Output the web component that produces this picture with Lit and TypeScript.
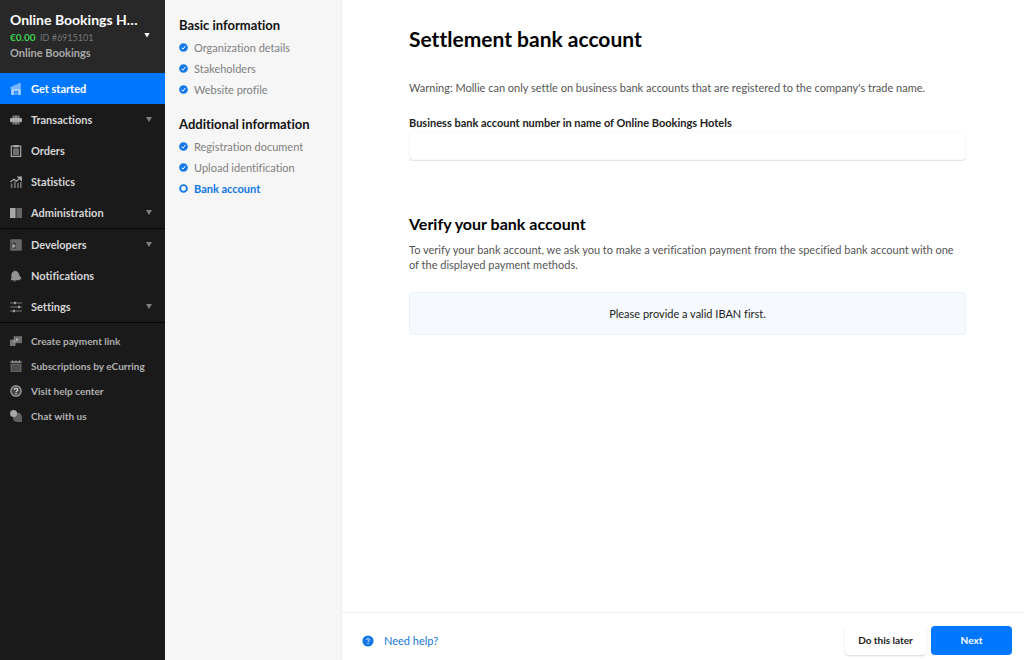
import { LitElement, html, css, svg, nothing, type TemplateResult, type SVGTemplateResult } from "lit";
import { customElement, property, state } from "lit/decorators.js";
import { classMap } from "lit/directives/class-map.js";

const icons: Record<string, SVGTemplateResult> = {
  home: svg`<path d="M0 4.600 6 1.200h2V0h2.800v5.600H0z" opacity=".55"/><path d="M1.200 5.600h9.600V12H8V8H4v4H1.200z" opacity=".75"/><path d="M4.600 8.600h2.800V12H4.600z" opacity=".4"/>`,
  stack: svg`<path d="M2.500 1.600h7v2.600h-7zM2.500 8.200h7v2.200h-7z" opacity=".65"/><rect y="4" width="12" height="4.200" rx="1"/>`,
  clipboard: svg`<path d="M1.300 1.200h9.400v10.200H1.300z" fill="none" stroke="currentColor" stroke-width="1.200"/><path d="M3 3.400h6V10H3z" opacity=".6"/><path d="M3.500 0h5v2.400h-5z"/>`,
  chart: svg`<path d="M.8 12V7.500h1.700V12zM4 12V5.500h1.700V12zM7.200 12V7h1.700V12zM10 12V6h1.700V12z" opacity=".6"/><path d="M.4 6 4 3.200l2.600 2L9.500 2.500" fill="none" stroke="currentColor" stroke-width="1.200"/><path d="M6.600.4H12v5.400z"/>`,
  book: svg`<path d="M0 1h5.600v10H0z"/><path d="M6.400 1H12v10H6.400z" opacity=".55"/>`,
  terminal: svg`<rect x=".2" y=".3" width="11.600" height="11.400" rx="1" opacity=".55"/><path d="M1.200 3.600h4.600v6H1.200z" fill="#1a1a1a" opacity=".5"/><path d="m2.400 4.400 3.400 2.500-3.400 2.500z"/>`,
  bell: svg`<path d="M4.200.2 5 1.100c2.600 0 4 1.700 4.300 4.200L11.500 8.500 9 10.200H.6L1.400 8V4.600c0-1.600 1-2.800 2.300-3.200z" opacity=".85"/><path d="M2.800 10.500h3.400L4.500 12z" opacity=".6"/>`,
  sliders: svg`<path d="M0 2h12M0 6h12M0 10h12" stroke="currentColor" opacity=".65"/><path d="M4 .8h1.800v2.400H4zM8 4.800h1.800v2.400H8zM3 8.800h1.800v2.400H3z"/>`,
  link: svg`<path d="M0 4.600h5.500v6.400H0z" opacity=".65"/><path d="M3.600 1.200H12v7H3.600z" opacity=".6"/><path d="M6 2.800 9.200 4.700 6 6.600z"/>`,
  calendar: svg`<path d="M.5 4h11v8H.5z" opacity=".5"/><path d="M.5 1h1.500V0h1v1h2.500V0h1v1H9V0h1v1h1.500v2.200H.5z" opacity=".7"/><path d="M2 6h8M2 8h8M2 10h8" stroke="#1a1a1a" stroke-width=".7" stroke-dasharray="1.500 .7"/>`,
  help: svg`<circle cx="6" cy="6" r="5.900" opacity=".8"/><circle cx="6" cy="6" r="4.300" fill="#444"/><path d="M4.300 4.900c0-2.200 3.400-2.100 3.400-.1C7.700 6 6 5.900 6 7.200M6 8.100v1.300" fill="none" stroke="#d0d0d0" stroke-width="1.300"/>`,
  chat: svg`<path d="M7.500 2.500a4.500 4.500 0 0 1 4.500 4.700V12H7a4.500 4.500 0 0 1-4.200-4.500z" opacity=".5"/><circle cx="3.600" cy="3.600" r="3.500"/>`,
  check: svg`<circle cx="6" cy="6" r="5.800"/><path d="m3.400 6.300 1.900 1.900 3.300-4.300" fill="none" stroke="#fff" stroke-width="1.300"/>`,
  ring: svg`<circle cx="6" cy="6" r="4.500" fill="#fff" stroke="currentColor" stroke-width="2.500"/>`,
  question: svg`<circle cx="6" cy="6" r="5.600"/><path d="M4.600 4.900c0-1.800 2.900-1.700 2.900-.1C7.500 5.800 6 5.800 6 7M6 7.900v1.100" fill="none" stroke="#fff"/>`,
};

const icon = (name: string): TemplateResult =>
  html`<svg class="icon" viewBox="0 0 12 12" fill="currentColor" aria-hidden="true">${icons[name]}</svg>`;

const base = css`
  * { box-sizing: border-box; }
  a { color: inherit; text-decoration: none; }
  button, input { font: inherit; font-variant-ligatures: inherit; color: inherit; }
  ul { list-style: none; margin: 0; padding: 0; }
  .icon { display: block; width: 12px; height: 12px; flex: none; }
`;

interface NavItem { label: string; icon: string; more?: boolean; active?: boolean; }

@customElement("side-nav")
class SideNav extends LitElement {
  static styles = [base, css`
    :host { display: block; background: #1a1a1a; color: #d6d6d6; font-weight: 700; }
    .account {
      display: grid; grid-template-columns: 1fr 10px; align-items: center;
      width: 100%; height: 73px; padding: 0 11px 3px 10px;
      border: 0; background: #282828; text-align: left;
    }
    .info { min-width: 0; }
    .name, .meta, .site { display: block; white-space: nowrap; }
    .name { font-size: 14px; color: #fff; line-height: 18px; }
    .meta { font-size: 10px; line-height: 16px; }
    .site { font-size: 11px; color: #a8a8a8; line-height: 13px; }
    .amount { color: #3fd14f; }
    .id { margin-left: 2px; color: #777; font-size: 9px; font-weight: 400; }
    .arrow { width: 6px; height: 5px; background: #808080; clip-path: polygon(0 0, 100% 0, 50% 100%); }
    .account .arrow { background: #fff; }
    .group { border-bottom: 1px solid #050505; }
    .item { display: flex; align-items: center; gap: 9px; height: 31px; padding: 0 13px 0 10px; font-size: 11px; }
    .item .icon { color: #a8a8a8; }
    .label { flex: 1; white-space: nowrap; }
    .active { background: #0077ff; color: #fff; }
    .active .icon { color: #d9ebff; }
    .small { padding-top: 5px; color: #b0b0b0; }
    .small .item { height: 25px; font-size: 10px; }
  `];

  private groups: NavItem[][] = [
    [
      { label: "Get started", icon: "home", active: true },
      { label: "Transactions", icon: "stack", more: true },
      { label: "Orders", icon: "clipboard" },
      { label: "Statistics", icon: "chart" },
      { label: "Administration", icon: "book", more: true },
    ],
    [
      { label: "Developers", icon: "terminal", more: true },
      { label: "Notifications", icon: "bell" },
      { label: "Settings", icon: "sliders", more: true },
    ],
  ];

  private links: NavItem[] = [
    { label: "Create payment link", icon: "link" },
    { label: "Subscriptions by eCurring", icon: "calendar" },
    { label: "Visit help center", icon: "help" },
    { label: "Chat with us", icon: "chat" },
  ];

  private row(item: NavItem) {
    return html`<li>
      <a class=${classMap({ item: true, active: !!item.active })} href="#">
        ${icon(item.icon)}<span class="label">${item.label}</span>
        ${item.more ? html`<span class="arrow"></span>` : nothing}
      </a>
    </li>`;
  }

  render() {
    return html`
      <button class="account">
        <span class="info">
          <span class="name">Online Bookings H…</span>
          <span class="meta"><span class="amount">€0.00</span> <span class="id">ID #6915101</span></span>
          <span class="site">Online Bookings</span>
        </span>
        <span class="arrow"></span>
      </button>
      <nav>
        ${this.groups.map((g) => html`<ul class="group">${g.map((i) => this.row(i))}</ul>`)}
        <ul class="small">${this.links.map((i) => this.row(i))}</ul>
      </nav>
    `;
  }
}

interface Step { label: string; current?: boolean; }

@customElement("step-list")
class StepList extends LitElement {
  static styles = [base, css`
    :host { display: block; padding: 15px 12px 0 14px; background: #f6f6f6; border-right: 1px solid #ececec; }
    h2 { margin: 0; font-size: 13px; line-height: 20px; font-weight: 700; color: #111; }
    .steps { margin: 2px 0 14px; }
    .step { display: flex; align-items: center; gap: 6px; height: 21px; font-size: 11px; color: #808080; }
    .step .icon { width: 9px; height: 9px; color: #1478e6; }
    .step.current { color: #0f77e6; font-weight: 700; }
  `];

  private sections: { title: string; steps: Step[] }[] = [
    { title: "Basic information", steps: [{ label: "Organization details" }, { label: "Stakeholders" }, { label: "Website profile" }] },
    { title: "Additional information", steps: [{ label: "Registration document" }, { label: "Upload identification" }, { label: "Bank account", current: true }] },
  ];

  render() {
    return this.sections.map((s) => html`
      <h2>${s.title}</h2>
      <ul class="steps">
        ${s.steps.map((t) => html`<li>
          <a class=${classMap({ step: true, current: !!t.current })} href="#">${icon(t.current ? "ring" : "check")}${t.label}</a>
        </li>`)}
      </ul>
    `);
  }
}

@customElement("bank-form")
class BankForm extends LitElement {
  @property() company = "Online Bookings Hotels";
  @state() private iban = "";

  static styles = [base, css`
    :host { display: flex; flex-direction: column; min-width: 0; background: #fff; }
    .body { flex: 1; padding: 24px 58px 24px 67px; font-size: 11px; line-height: 15px; color: #555; }
    h1 { margin: 0; font-size: 21px; line-height: 30px; font-weight: 700; color: #000; }
    h2 { margin: 0; font-size: 16px; line-height: 20px; font-weight: 700; color: #000; }
    p { margin: 0; }
    .warning { margin-top: 26px; }
    .label { display: block; margin-top: 20px; font-size: 11px; font-weight: 700; color: #222; }
    .input {
      display: block; width: 100%; height: 29px; margin-top: 1px; padding: 0 10px;
      border: 1px solid #f9f9f9; border-radius: 4px; outline: 0; background: #fff;
      box-shadow: 0 1px 1px #e4e4e4;
    }
    .verify { margin-top: 54px; }
    .verify p { margin-top: 8px; }
    .notice {
      display: grid; place-items: center; min-height: 43px; margin-top: 20px;
      border: 1px solid #e8f0fa; border-radius: 4px; background: #f6faff; color: #222;
    }
    .footer {
      display: flex; align-items: center; gap: 5px; height: 48px; padding: 8px 12px 0 20px;
      border-top: 1px solid #f1f1f1; font-size: 10px; font-weight: 700;
    }
    .help { display: flex; align-items: center; gap: 10px; margin-right: auto; color: #1478d4; font-size: 11px; font-weight: 400; }
    .help .icon { color: #1478e6; }
    .button {
      min-width: 81px; height: 29px; padding: 0 12px 1px; border: 0; border-radius: 4px;
      background: #fff; color: #222; box-shadow: 0 1px 2px #d8d8d8;
    }
    .primary { background: #0077ff; color: #fff; box-shadow: none; }
  `];

  render() {
    return html`
      <main class="body">
        <h1>Settlement bank account</h1>
        <p class="warning">Warning: Mollie can only settle on business bank accounts that are registered to the company's trade name.</p>
        <label class="label" for="iban">Business bank account number in name of ${this.company}</label>
        <input class="input" id="iban" type="text" .value=${this.iban}
          @input=${(e: Event) => (this.iban = (e.target as HTMLInputElement).value)} />
        <section class="verify">
          <h2>Verify your bank account</h2>
          <p>To verify your bank account, we ask you to make a verification payment from the specified bank account with one of the displayed payment methods.</p>
          <div class="notice">Please provide a valid IBAN first.</div>
        </section>
      </main>
      <footer class="footer">
        <a class="help" href="#">${icon("question")}Need help?</a>
        <button class="button">Do this later</button>
        <button class="button primary">Next</button>
      </footer>
    `;
  }
}

@customElement("app-root")
class AppRoot extends LitElement {
  static styles = css`
    :host {
      display: grid; grid-template-columns: 165px 177px minmax(0, 1fr); min-height: 100vh;
      font-family: Lato, "Liberation Sans", sans-serif; font-variant-ligatures: none;
    }
  `;

  render() {
    return html`<side-nav></side-nav><step-list></step-list><bank-form></bank-form>`;
  }
}
